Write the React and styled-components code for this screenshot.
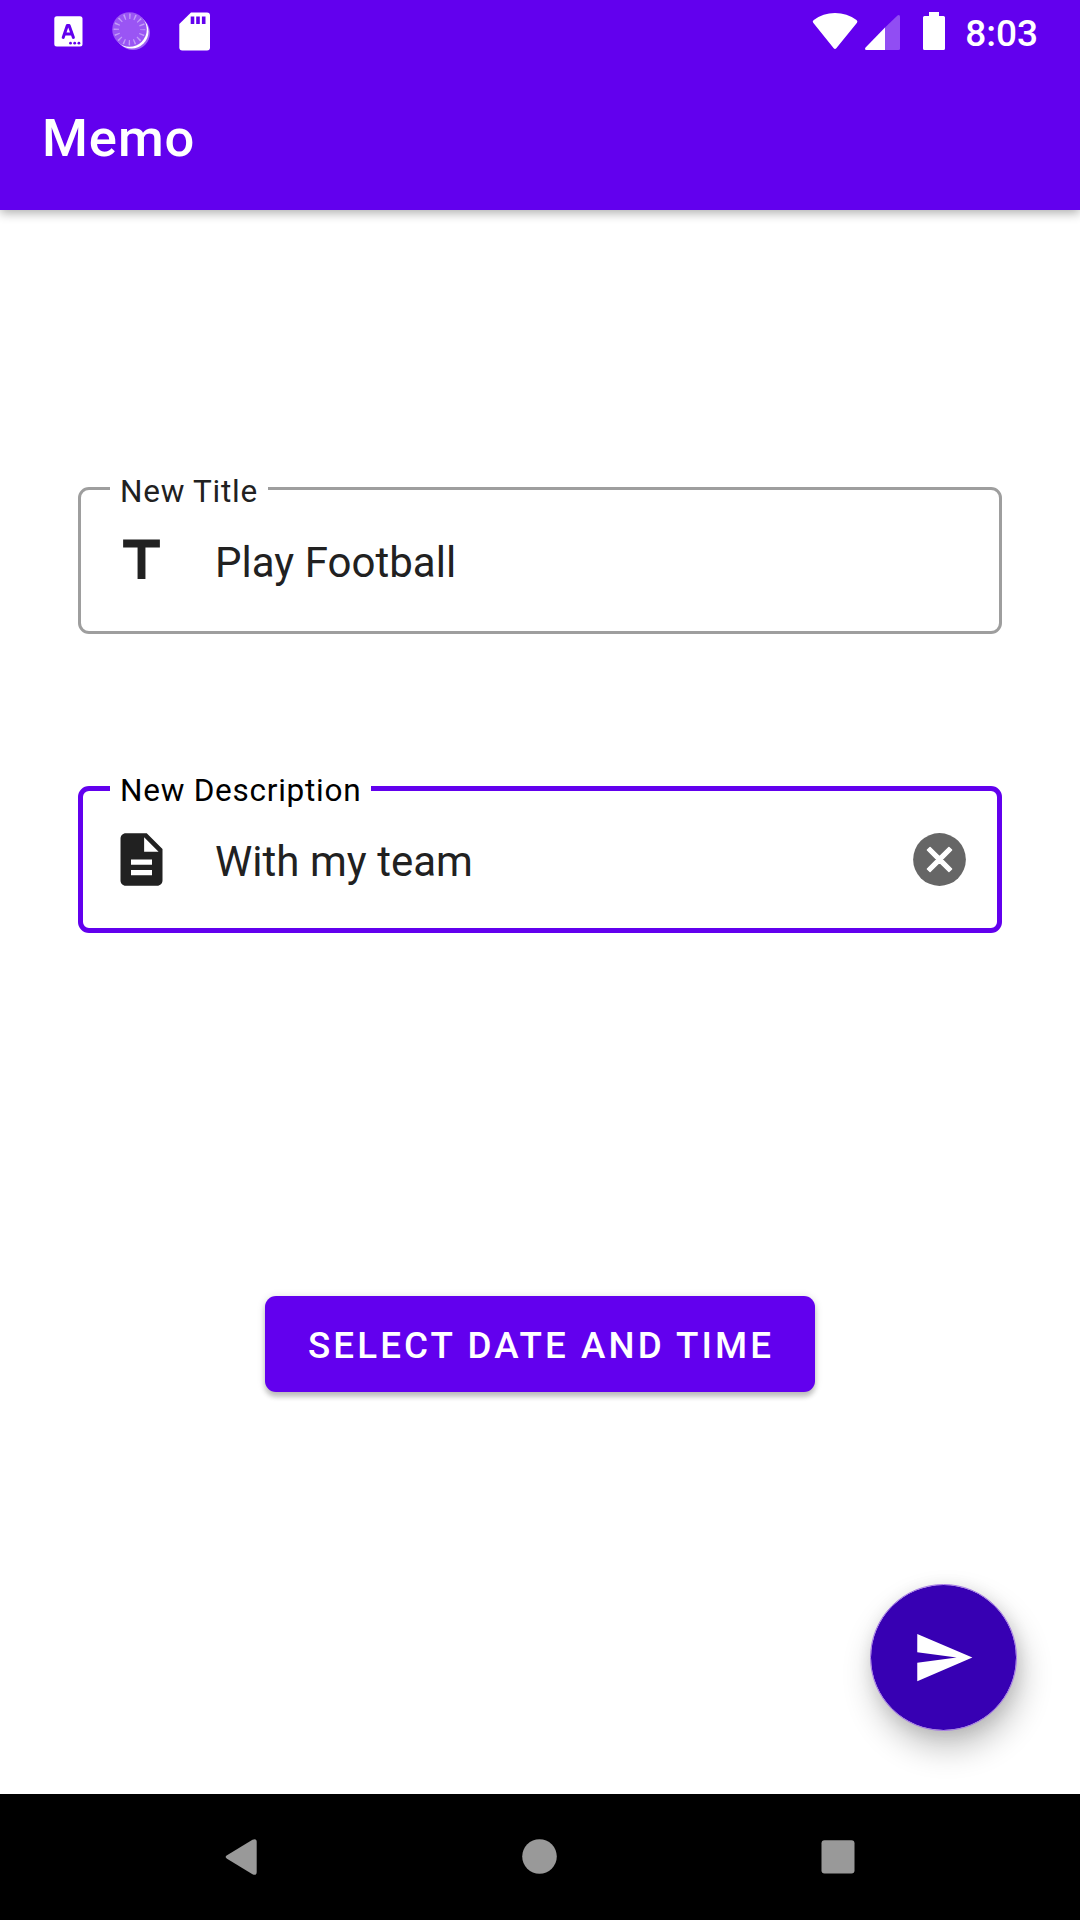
import React from 'react';
import styled, { createGlobalStyle } from 'styled-components';

const GlobalStyle = createGlobalStyle`
  *, *::before, *::after { box-sizing: border-box; }
  body { margin: 0; background: #fff; font-family: Roboto, sans-serif; }
  svg { display: block; flex: none; }
`;

const Screen = styled.div`
  width: 1080px;
  height: 1920px;
  display: flex;
  flex-direction: column;
  background: #fff;
  overflow: hidden;
`;

const Header = styled.header`
  flex: none;
  height: 210px;
  background: #6200ee;
  color: #fff;
  box-shadow: 0 3px 10px rgba(0, 0, 0, 0.32);
`;

const StatusBar = styled.div`
  height: 63px;
  display: flex;
  justify-content: space-between;
  padding: 0 42px 0 48px;
`;

const StatusGroup = styled.div`
  display: flex;
  height: 63px;
  align-items: center;
`;

const Clock = styled.span`
  margin-left: 18px;
  font-size: 37px;
  font-weight: 500;
  line-height: 67px;
  height: 63px;
`;

const AppTitle = styled.h1`
  margin: 0;
  padding-left: 42px;
  font-size: 52.5px;
  font-weight: 500;
  line-height: 151px;
  letter-spacing: 0.95px;
  height: 147px;
`;

const Content = styled.main`
  flex: 1;
  display: flex;
  flex-direction: column;
  padding: 277px 63px 63px 78px;
`;

const Field = styled.label`
  position: relative;
  width: 924px;
  height: 147px;
  display: flex;
  align-items: center;
  padding: 0 ${p => 31 - p.$line}px 0 ${p => 32 - p.$line}px;
  border: ${p => p.$line}px solid ${p => (p.$focused ? '#6200ee' : '#9e9e9e')};
  border-radius: 11px;
  margin-bottom: ${p => p.$gap}px;
  color: #212121;
`;

const FieldLabel = styled.span`
  position: absolute;
  left: ${p => 32 - p.$line}px;
  top: ${p => -14 - p.$line}px;
  width: ${p => p.$notch}px;
  height: 36px;
  padding-left: 10px;
  background: #fff;
  color: ${p => (p.$focused ? '#000' : '#212121')};
  font-size: 31.5px;
  line-height: 37px;
  letter-spacing: 0.75px;
  white-space: nowrap;
`;

const FieldValue = styled.span`
  flex: 1;
  margin-left: 42px;
  font-size: 42px;
  line-height: 50px;
  padding-top: 4px;
  letter-spacing: 0.03px;
`;

const DateButton = styled.button`
  align-self: flex-start;
  margin-left: 187px;
  width: 550px;
  height: 96px;
  border: 0;
  border-radius: 11px;
  padding: 3px 0 0 43px;
  text-align: left;
  background: #6200ee;
  color: #fff;
  font: 500 36.75px/94px Roboto, sans-serif;
  letter-spacing: 3.1px;
  white-space: nowrap;
  box-shadow: 0 5px 5px rgba(0, 0, 0, 0.2), 0 1px 8px rgba(0, 0, 0, 0.14);
`;

const Fab = styled.button`
  align-self: flex-end;
  margin-top: auto;
  width: 147px;
  height: 147px;
  padding: 0;
  border: 1px solid #a67be6;
  border-radius: 50%;
  display: grid;
  place-items: center;
  background: #3700b3;
  background-clip: padding-box;
  color: #fff;
  box-shadow: 4px 17px 32px rgba(0, 0, 0, 0.24), 2px 3px 16px rgba(0, 0, 0, 0.1);
`;

const NavBar = styled.nav`
  flex: none;
  height: 126px;
  background: #000;
  display: flex;
  justify-content: center;
  align-items: center;
`;

const Icon = ({ d, size = 63 }) => (
  <svg width={size} height={size} viewBox="0 0 24 24" fill="currentColor"><path d={d} /></svg>
);

const TITLE = 'M5 4v3h5.5v12h3V7H19V4z';
const DESCRIPTION = 'M14 2H6c-1.1 0-1.99.9-1.99 2L4 20c0 1.1.89 2 1.99 2H18c1.1 0 2-.9 2-2V8l-6-6zm2 16H8v-2h8v2zm0-4H8v-2h8v2zm-3-5V3.5L18.5 9H13z';
const SEND = 'M2.01 21L23 12 2.01 3 2 10l15 2-15 2z';

const ClearIcon = () => (
  <svg width="63" height="63" viewBox="0 0 24 24">
    <circle cx="12" cy="12" r="10.05" fill="#666" />
    <path
      d="M15.59 7.4L16.6 8.41 13.01 12 16.6 15.59 15.59 16.6 12 13.01 8.41 16.6 7.4 15.59 10.99 12 7.4 8.41 8.41 7.4 12 10.99z"
      fill="#fff" stroke="#fff" strokeWidth=".55" strokeLinejoin="round"
    />
  </svg>
);

const NotificationIcons = () => (
  <svg width="170" height="63" viewBox="48 0 170 63">
    <rect x="54.3" y="16.2" width="28.2" height="30.4" rx="2.5" fill="#fff" />
    <path d="M63.2 37.4L67.3 25.4h1.8L73.4 37.4M64.6 34h7.4" fill="none" stroke="#6200ee" strokeWidth="3" strokeLinecap="round" strokeLinejoin="round" />
    <g fill="#6200ee">
      <circle cx="70.5" cy="43.2" r="1.4" /><circle cx="74.7" cy="43.2" r="1.4" /><circle cx="78.9" cy="43.2" r="1.4" />
    </g>
    <circle cx="133" cy="33" r="17" fill="#fff" fillOpacity=".38" />
    <circle cx="131.5" cy="31.5" r="17" fill="#fff" />
    <circle cx="129.5" cy="29.5" r="17.3" fill="#9a55f4" />
    <circle cx="129.5" cy="29.5" r="13.2" fill="none" stroke="#c39bf9" strokeWidth="5.4" strokeDasharray="1.4 3.784" strokeDashoffset=".7" />
    <path d="M191 12.6H207a3 3 0 0 1 3 3V47.400a3 3 0 0 1-3 3H182.300a3 3 0 0 1-3-3V24z" fill="#fff" />
    <path d="M190.7 16.500h3.600v7.500h-3.600zM196.200 16.500h3.600v7.500h-3.600zM201.900 16.500h3.600v7.500h-3.600z" fill="#6200ee" />
  </svg>
);

const SystemIcons = () => (
  <svg width="137" height="63" viewBox="810 0 137 63" fill="#fff">
    <path d="M813.2 22.8Q812 21.2 813.8 20Q823 13 835 13Q847 13 856.5 20Q858 21.2 857 22.8L836.3 48.2Q835 49.8 833.7 48.2Z" />
    <path d="M866.5 50Q864 50 865.6 47.6L885 27.5V50z" />
    <path d="M885 27.5L897.5 15.4Q900 14 900 17V48.5Q900 50 898.5 50H885z" fillOpacity=".3" />
    <path d="M929 12h10v4h4.5q1.5 0 1.5 1.5v31q0 1.5-1.5 1.5h-19q-1.5 0-1.5-1.5v-31q0-1.5 1.5-1.5h4.5z" />
  </svg>
);

const NavKeys = styled.svg`
  width: 640px;
  height: 126px;
`;

export default function App() {
  return (
    <Screen>
      <GlobalStyle />
      <Header>
        <StatusBar>
          <StatusGroup><NotificationIcons /></StatusGroup>
          <StatusGroup><SystemIcons /><Clock>8:03</Clock></StatusGroup>
        </StatusBar>
        <AppTitle>Memo</AppTitle>
      </Header>
      <Content>
        <Field $line={3} $gap={152}>
          <FieldLabel $line={3} $notch={158}>New Title</FieldLabel>
          <Icon d={TITLE} />
          <FieldValue>Play Football</FieldValue>
        </Field>
        <Field $line={5} $gap={363} $focused>
          <FieldLabel $line={5} $notch={261} $focused>New Description</FieldLabel>
          <Icon d={DESCRIPTION} />
          <FieldValue>With my team</FieldValue>
          <ClearIcon />
        </Field>
        <DateButton>SELECT DATE AND TIME</DateButton>
        <Fab aria-label="Send"><Icon d={SEND} /></Fab>
      </Content>
      <NavBar>
        <NavKeys viewBox="220 1794 640 126" fill="#999">
          <path d="M227 1855.3L252.5 1839.7Q256.7 1838 256.7 1842V1872Q256.7 1876 252.5 1874.3L227 1858.7Q224.3 1857 227 1855.3Z" />
          <circle cx="539.5" cy="1856.5" r="17.3" />
          <rect x="821.5" y="1840.3" width="33" height="33.2" rx="3" />
        </NavKeys>
      </NavBar>
    </Screen>
  );
}
